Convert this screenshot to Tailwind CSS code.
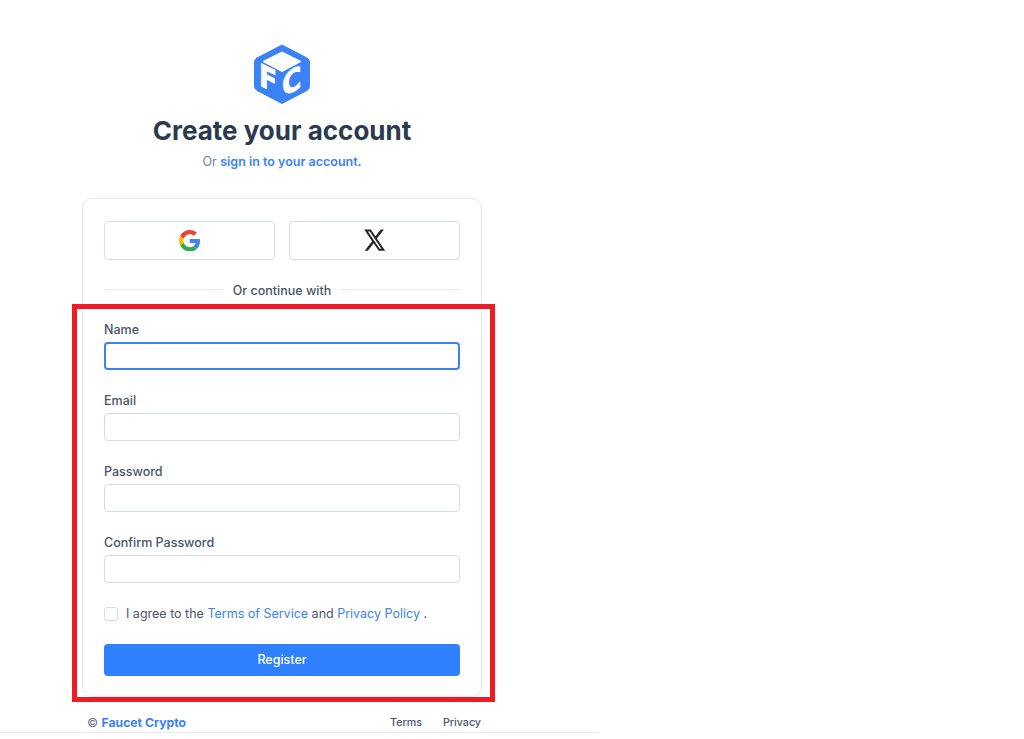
<!DOCTYPE html>
<html lang="en">
<head>
    <meta charset="UTF-8">
    <meta name="viewport" content="width=device-width, initial-scale=1.0">
    <title>Create your account</title>
    <script src="https://cdn.jsdelivr.net/npm/@tailwindcss/browser@4"></script>
</head>
<body class="relative bg-white h-[739px] overflow-hidden font-['Inter',sans-serif] text-[#334155]">

<!-- Left column -->
<div class="w-[598px] h-[733px] border-b border-[#e2e8f0] pl-[82px] pt-[43px]">
  <div class="w-[400px]">

    <!-- Logo + heading -->
    <div class="flex flex-col items-center">
      <svg class="w-[58px] h-[62px] overflow-visible" viewBox="0 0 58 62">
        <path d="M29 2 L54 15 Q56.500 16.500 56.500 19 L56.500 43 Q56.500 46 54 47.500 L29 60.500 L4 47.500 Q1.500 46 1.500 43 L1.500 19 Q1.500 16.500 4 15 Z" fill="#3b82f6" stroke="#3b82f6" stroke-linejoin="round"/>
        <path d="M29 9 L48 18.500 L29 28.500 L10 18.500 Z" fill="#fff" stroke="#fff" stroke-linejoin="round"/>
        <text transform="matrix(0.85 0.425 0 1 6 42)" font-family="DejaVu Sans" font-weight="700" font-size="31" fill="#fff" stroke="#fff" stroke-width="0.8">F</text>
        <text transform="matrix(0.85 -0.425 0 1 29 54)" font-family="DejaVu Sans" font-weight="700" font-size="31" fill="#fff" stroke="#fff" stroke-width="0.8">C</text>
      </svg>
      <h1 class="mt-[8px] text-[26px] leading-[36px] font-bold text-[#2b3a4f]">Create your account</h1>
      <p class="mt-[3px] text-[12.500px] leading-[20px] text-[#718096]">Or <a class="font-semibold text-[#3b82f6]">sign in to your account.</a></p>
    </div>

    <!-- Card -->
    <div class="mt-[26px] h-[499px] border border-[#e2e8f0] rounded-[10px] px-[21px] pt-[22px]">
      <div class="grid grid-cols-2 gap-[14px]">
        <button class="h-[39px] flex items-center justify-center border border-[#d5deea] rounded-[4px]">
          <svg class="w-[21.500px] h-[21.500px]" viewBox="0 0 48 48">
            <path fill="#EA4335" d="M24 9.500c3.540 0 6.710 1.220 9.210 3.600l6.850-6.850C35.900 2.380 30.470 0 24 0 14.620 0 6.510 5.380 2.560 13.220l7.980 6.190C12.430 13.720 17.740 9.500 24 9.500z"/>
            <path fill="#4285F4" d="M46.980 24.550c0-1.570-.15-3.090-.38-4.550H24v9.020h12.940c-.58 2.960-2.260 5.480-4.780 7.180l7.730 6c4.510-4.180 7.090-10.360 7.090-17.650z"/>
            <path fill="#FBBC05" d="M10.530 28.590c-.48-1.450-.76-2.990-.76-4.590s.27-3.140.76-4.590l-7.980-6.190C.92 16.460 0 20.120 0 24c0 3.880.92 7.540 2.560 10.780l7.970-6.190z"/>
            <path fill="#34A853" d="M24 48c6.480 0 11.930-2.130 15.890-5.810l-7.730-6c-2.150 1.450-4.920 2.300-8.160 2.300-6.260 0-11.570-4.220-13.470-9.910l-7.980 6.190C6.510 42.620 14.620 48 24 48z"/>
          </svg>
        </button>
        <button class="h-[39px] flex items-center justify-center border border-[#d5deea] rounded-[4px]">
          <svg class="w-[23.300px] h-[26.300px]" viewBox="0 0 24 24" preserveAspectRatio="none" fill="#27272a">
            <path d="M18.244 2.250h3.308l-7.227 8.260 8.502 11.240H16.170l-5.214-6.817L4.990 21.750H1.680l7.730-8.835L1.254 2.250H8.080l4.713 6.231zm-1.161 17.520h1.833L7.084 4.126H5.117z"/>
          </svg>
        </button>
      </div>

      <div class="mt-[21px] flex items-start gap-[10px]">
        <div class="flex-1 h-px mt-[8px] bg-[#e2e8f0]"></div>
        <span class="text-[12.500px] leading-[20px] text-[#475569] font-medium">Or continue with</span>
        <div class="flex-1 h-px mt-[8px] bg-[#e2e8f0]"></div>
      </div>

      <!-- Form -->
      <form class="mt-[19px]">
        <label class="block text-[12.500px] leading-[20px] font-medium text-[#475569]">Name</label>
        <input class="mt-[2px] block w-full h-[28px] rounded-[4px] border-2 border-[#3b82f6]">

        <label class="mt-[21px] block text-[12.500px] leading-[20px] font-medium text-[#475569]">Email</label>
        <input class="mt-[2px] block w-full h-[28px] rounded-[4px] border border-[#d3dcea]">

        <label class="mt-[21px] block text-[12.500px] leading-[20px] font-medium text-[#475569]">Password</label>
        <input class="mt-[2px] block w-full h-[28px] rounded-[4px] border border-[#d3dcea]">

        <label class="mt-[21px] block text-[12.500px] leading-[20px] font-medium text-[#475569]">Confirm Password</label>
        <input class="mt-[2px] block w-full h-[28px] rounded-[4px] border border-[#d3dcea]">

        <div class="mt-[21px] flex items-center gap-[8px] text-[12.500px] leading-[20px] text-[#475569]">
          <span class="w-[14px] h-[14px] border border-[#d3dcea] rounded-[3px]"></span>
          <span>I agree to the <a class="text-[#3b82f6]">Terms of Service</a> and <a class="text-[#3b82f6]">Privacy Policy</a> .</span>
        </div>

        <button type="button" class="mt-[20px] w-full h-[32px] rounded-[4px] bg-[#2f80ff] text-white text-[12.500px] font-medium">Register</button>
      </form>
    </div>

    <!-- Footer -->
    <div class="mt-[17px] pl-[5px] pr-px flex items-center justify-between text-[10.700px] leading-[18px]">
      <span class="text-[12.200px] text-[#64748b]">© <a class="font-bold text-[#3b82f6]">Faucet Crypto</a></span>
      <div class="flex gap-[21px] text-[#475569] font-medium">
        <a>Terms</a>
        <a>Privacy</a>
      </div>
    </div>
  </div>
</div>

<!-- Red annotation box -->
<div class="absolute left-[72px] top-[304px] w-[423px] h-[398px] border-[5px] border-[#ed1c24]"></div>

</body>
</html>
